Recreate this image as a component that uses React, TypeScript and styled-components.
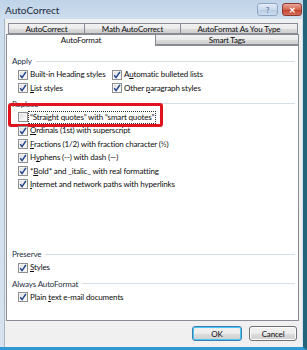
import React from "react";
import styled, { createGlobalStyle } from "styled-components";

const GlobalStyle = createGlobalStyle`
  html, body {
    margin: 0;
    padding: 0;
    background: #2a6a80;
  }
  body {
    font-family: Lato, "Noto Sans", sans-serif;
  }
`;

const Window = styled.div`
  width: 307px;
  height: 350px;
  box-sizing: border-box;
  display: flex;
  flex-direction: column;
  background: linear-gradient(180deg, #bfd3e8 0px, #cfdeee 20px, #d7e2ee 100%);
  border-right: 4px solid #23647b;
  border-bottom: 3px solid #2f9ad2;
  color: #0c0c0c;
`;

const TitleBar = styled.div`
  height: 19px;
  flex: none;
  display: flex;
  align-items: center;
  padding-left: 5px;
  font-size: 10px;
  color: #1a2a3a;
`;

const TitleText = styled.span`
  flex: 1;
`;

const CaptionButton = styled.div<{ $close?: boolean }>`
  width: ${(p) => (p.$close ? "20px" : "21px")};
  height: 13px;
  margin-right: ${(p) => (p.$close ? "1px" : "4px")};
  box-sizing: border-box;
  border: 1px solid ${(p) => (p.$close ? "#8a3a30" : "#8ea6c2")};
  border-radius: 3px;
  background: ${(p) =>
    p.$close
      ? "linear-gradient(180deg, #e9a99c 0%, #d2644f 50%, #c2402a 52%, #d4705c 100%)"
      : "linear-gradient(180deg, #e3ecf6 0%, #c9d8ea 50%, #b7cbe2 52%, #cddcee 100%)"};
  display: flex;
  align-items: center;
  justify-content: center;
  font-size: 8px;
  font-weight: bold;
  color: ${(p) => (p.$close ? "#ffffff" : "#6a84a8")};
`;

const Body = styled.div`
  flex: 1;
  display: flex;
  flex-direction: column;
  margin-left: 4px;
  margin-right: 1px;
  background: #f0f0f0;
  border-left: 1px solid #a8b6c4;
  padding: 4px 3px 0 1px;
  letter-spacing: -0.15px;
`;

const TabRow = styled.div<{ $indent: number }>`
  display: flex;
  padding-left: ${(p) => p.$indent}px;
  padding-right: 1px;
  height: 11px;
  align-items: flex-end;
`;

const Tab = styled.div<{ $w: number; $active?: boolean }>`
  width: ${(p) => p.$w}px;
  flex: none;
  height: ${(p) => (p.$active ? "12px" : "11px")};
  box-sizing: border-box;
  border: 1px solid #898c95;
  border-bottom: ${(p) => (p.$active ? "none" : "1px solid #898c95")};
  margin-left: -1px;
  background: ${(p) =>
    p.$active ? "#ffffff" : "linear-gradient(180deg, #f2f2f2 0%, #ebebeb 50%, #dddddd 51%, #cfcfcf 100%)"};
  position: ${(p) => (p.$active ? "relative" : "static")};
  z-index: ${(p) => (p.$active ? 1 : 0)};
  margin-bottom: ${(p) => (p.$active ? "-1px" : "0")};
  font-size: 8px;
  line-height: 10px;
  text-align: center;
  white-space: nowrap;
`;

const Panel = styled.div`
  height: 276px;
  box-sizing: border-box;
  background: #ffffff;
  border: 1px solid #898c95;
  display: flex;
  flex-direction: column;
  padding: 6px 3px 16px 5px;
  font-size: 8px;
`;

const Group = styled.div<{ $push?: boolean }>`
  display: flex;
  flex-direction: column;
  margin-top: ${(p) => (p.$push ? "auto" : "2px")};
`;

const GroupLabel = styled.div`
  height: 14px;
  display: flex;
  align-items: center;
  gap: 4px;
  color: #1e2f44;
  white-space: nowrap;
  &::after {
    content: "";
    flex: 1;
    height: 1px;
    background: #d5dfe5;
  }
`;

const Grid = styled.div`
  display: grid;
  grid-template-columns: 94px 1fr;
`;

const Row = styled.div<{ $marked?: boolean }>`
  height: 13.4px;
  display: flex;
  align-items: center;
  padding-left: 6px;
  gap: 2px;
  white-space: nowrap;
  position: relative;
  ${(p) =>
    p.$marked &&
    `
    &::before {
      content: "";
      position: absolute;
      left: -4px;
      top: -8px;
      width: 155px;
      height: 24px;
      box-sizing: border-box;
      border: 3.5px solid #e0141e;
      border-radius: 3px;
    }
  `}
`;

const Label = styled.span<{ $focus?: boolean }>`
  padding: 1px 1px;
  border: 1px ${(p) => (p.$focus ? "dotted #333" : "solid transparent")};
  margin-left: -2px;
  line-height: 9px;
`;

const Key = styled.u`
  text-decoration-thickness: 1px;
`;

const Box = styled.span`
  width: 10px;
  height: 10px;
  flex: none;
  box-sizing: border-box;
  border: 1px solid #8e8f8f;
  background: linear-gradient(135deg, #dcdcdc 0%, #f2f2f2 60%, #ffffff 100%);
  box-shadow: inset 0 0 0 1px #f4f4f4;
  display: flex;
  align-items: center;
  justify-content: center;
`;

const Footer = styled.div`
  flex: 1;
  display: flex;
  justify-content: flex-end;
  align-items: center;
  gap: 7px;
  padding-right: 2px;
  padding-bottom: 1px;
`;

const Button = styled.div<{ $default?: boolean }>`
  width: ${(p) => (p.$default ? "50px" : "48px")};
  height: 15px;
  box-sizing: border-box;
  border: 1px solid ${(p) => (p.$default ? "#3c7fb1" : "#707070")};
  border-radius: 3px;
  background: linear-gradient(180deg, #f2f2f2 0%, #ebebeb 50%, #dddddd 51%, #cfcfcf 100%);
  box-shadow: inset 0 0 0 1px ${(p) => (p.$default ? "#48c6f5" : "#fbfbfb")};
  font-size: 8px;
  display: flex;
  align-items: center;
  justify-content: center;
`;

const Check = ({ on }: { on: boolean }) => (
  <Box>
    {on && (
      <svg width="8" height="8" viewBox="0 0 8 8">
        <path d="M1.2 4.2 L3.1 6.6 L6.9 0.9" fill="none" stroke="#21438a" strokeWidth="1.5" />
      </svg>
    )}
  </Box>
);

type Item = { on: boolean; text: React.ReactNode; focus?: boolean; marked?: boolean };

const Option = ({ on, text, focus, marked }: Item) => (
  <Row $marked={marked}>
    <Check on={on} />
    <Label $focus={focus}>{text}</Label>
  </Row>
);

const replaceItems: Item[] = [
  { on: false, text: "\u201cStraight quotes\u201d with \u201csmart quotes\u201d", focus: true, marked: true },
  { on: true, text: <><Key>O</Key>rdinals (1st) with superscript</> },
  { on: true, text: <><Key>F</Key>ractions (1/2) with fraction character (½)</> },
  { on: true, text: <>H<Key>y</Key>phens (--) with dash (—)</> },
  { on: true, text: <>*<Key>B</Key>old* and _italic_ with real formatting</> },
  { on: true, text: <><Key>I</Key>nternet and network paths with hyperlinks</> },
];

export default function App() {
  return (
    <>
      <GlobalStyle />
      <Window>
        <TitleBar>
          <TitleText>AutoCorrect</TitleText>
          <CaptionButton>?</CaptionButton>
          <CaptionButton $close>✕</CaptionButton>
        </TitleBar>
        <Body>
          <TabRow $indent={3}>
            <Tab $w={77}>AutoCorrect</Tab>
            <Tab $w={97}>Math AutoCorrect</Tab>
            <Tab $w={118}>AutoFormat As You Type</Tab>
          </TabRow>
          <TabRow $indent={1}>
            <Tab $w={150} $active>AutoFormat</Tab>
            <Tab $w={144}>Smart Tags</Tab>
          </TabRow>
          <Panel>
            <Group>
              <GroupLabel>Apply</GroupLabel>
              <Grid>
                <Option on text="Built-in Heading styles" />
                <Option on text={<>A<Key>u</Key>tomatic bulleted lists</>} />
                <Option on text={<><Key>L</Key>ist styles</>} />
                <Option on text={<>Other <Key>p</Key>aragraph styles</>} />
              </Grid>
            </Group>
            <Group>
              <GroupLabel>Replace</GroupLabel>
              {replaceItems.map((it, i) => (
                <Option key={i} {...it} />
              ))}
            </Group>
            <Group $push>
              <GroupLabel>Preserve</GroupLabel>
              <Option on text={<><Key>S</Key>tyles</>} />
            </Group>
            <Group>
              <GroupLabel>Always AutoFormat</GroupLabel>
              <Option on text={<>Plain <Key>t</Key>ext e-mail documents</>} />
            </Group>
          </Panel>
          <Footer>
            <Button $default>OK</Button>
            <Button>Cancel</Button>
          </Footer>
        </Body>
      </Window>
    </>
  );
}
